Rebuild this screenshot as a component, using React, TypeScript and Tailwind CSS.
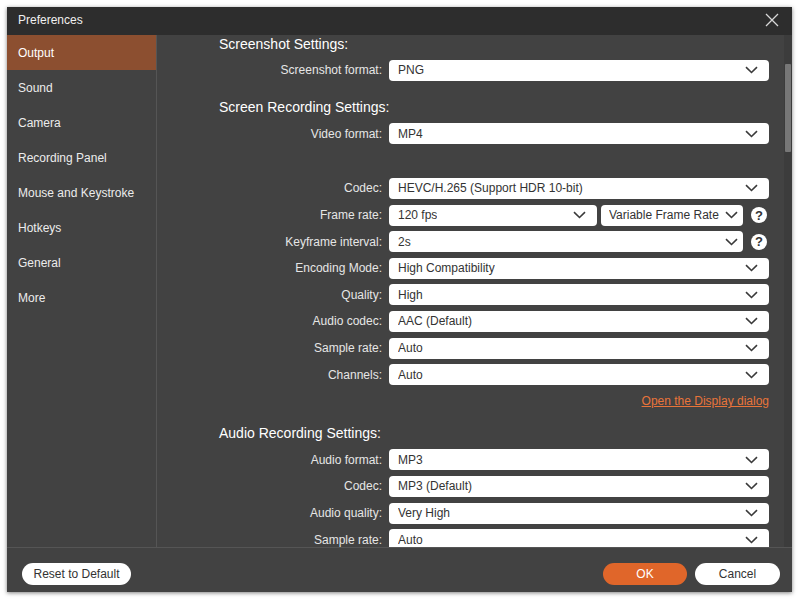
import React from "react";

const font = { fontFamily: '"Liberation Sans", Arial, sans-serif' };

function Chevron() {
  return (
    <svg width="13" height="8" viewBox="0 0 13 8" className="shrink-0">
      <path d="M1 1.2 L6.5 6.5 L12 1.2" fill="none" stroke="#3a3a3a" strokeWidth="1.6" />
    </svg>
  );
}

function Select({ value, className = "" }: { value: string; className?: string }) {
  return (
    <div className={`h-[21px] bg-white rounded-[4px] flex items-center justify-between pl-[9px] pr-[11px] text-[12px] text-[#333] ${className}`}>
      <span className="whitespace-nowrap overflow-hidden">{value}</span>
      <Chevron />
    </div>
  );
}

function Help() {
  return (
    <div className="w-[16px] h-[16px] rounded-full bg-white flex items-center justify-center text-[#333] text-[13px] font-bold shrink-0 leading-none">
      ?
    </div>
  );
}

function Row({ label, children }: { label: string; children: React.ReactNode }) {
  return (
    <div className="h-[26.6px] flex items-center">
      <div className="w-[232px] text-right pr-[7px] text-[12px] text-[#e6e6e6] shrink-0 whitespace-nowrap">{label}</div>
      <div className="w-[380px] flex items-center gap-[4px]">{children}</div>
    </div>
  );
}

function Heading({ children, className = "" }: { children: React.ReactNode; className?: string }) {
  return <div className={`h-[18px] flex items-center pl-[62px] text-[14px] text-white ${className}`}>{children}</div>;
}

export default function App() {
  const nav = ["Output", "Sound", "Camera", "Recording Panel", "Mouse and Keystroke", "Hotkeys", "General", "More"];
  return (
    <div className="w-[800px] h-[600px] bg-white p-[7px] pr-[8px] pb-[8px]" style={font}>
      <div className="w-[785px] h-[585px] bg-[#424242] flex flex-col shadow-[0_1px_4px_rgba(0,0,0,0.5)]">
        <div className="h-[28px] bg-[#2d2d2d] flex items-center justify-between pl-[11px] pr-[13px] shrink-0">
          <span className="text-[12px] text-[#f0f0f0] -mt-[2px]">Preferences</span>
          <svg width="14" height="14" viewBox="0 0 14 14" className="-mt-[2px]">
            <path d="M1 1 L13 13 M13 1 L1 13" stroke="#d8d8d8" strokeWidth="1.3" />
          </svg>
        </div>
        <div className="flex flex-1 min-h-0 border-b border-[#555]">
          <div className="w-[150px] border-r border-[#555] shrink-0 flex flex-col">
            {nav.map((n, i) => (
              <div
                key={n}
                className={`h-[35px] flex items-center pl-[11px] text-[12px] ${i === 0 ? "bg-[#8c4f30] text-white" : "text-[#ececec]"}`}
              >
                {n}
              </div>
            ))}
          </div>
          <div className="flex-1 relative overflow-hidden">
            <div className="flex flex-col">
              <Heading>Screenshot Settings:</Heading>
              <div className="mt-[4px]">
                <Row label="Screenshot format:"><Select value="PNG" className="w-full" /></Row>
              </div>
              <Heading className="mt-[15px]">Screen Recording Settings:</Heading>
              <div className="mt-[4px]">
                <Row label="Video format:"><Select value="MP4" className="w-full" /></Row>
              </div>
              <div className="mt-[28px]">
                <Row label="Codec:"><Select value="HEVC/H.265 (Support HDR 10-bit)" className="w-full" /></Row>
                <Row label="Frame rate:">
                  <Select value="120 fps" className="w-[208px]" />
                  <Select value="Variable Frame Rate" className="w-[142px] !pl-[8px] !pr-[5px]" />
                  <div className="ml-[4px]"><Help /></div>
                </Row>
                <Row label="Keyframe interval:">
                  <Select value="2s" className="w-[354px] !pr-[5px]" />
                  <div className="ml-[4px]"><Help /></div>
                </Row>
                <Row label="Encoding Mode:"><Select value="High Compatibility" className="w-full" /></Row>
                <Row label="Quality:"><Select value="High" className="w-full" /></Row>
                <Row label="Audio codec:"><Select value="AAC (Default)" className="w-full" /></Row>
                <Row label="Sample rate:"><Select value="Auto" className="w-full" /></Row>
                <Row label="Channels:"><Select value="Auto" className="w-full" /></Row>
                <div className="h-[26.6px] flex items-center justify-end w-[612px]">
                  <span className="text-[12px] text-[#e8743a] underline">Open the Display dialog</span>
                </div>
              </div>
              <Heading className="mt-[10px]">Audio Recording Settings:</Heading>
              <div className="mt-[4px]">
                <Row label="Audio format:"><Select value="MP3" className="w-full" /></Row>
                <Row label="Codec:"><Select value="MP3 (Default)" className="w-full" /></Row>
                <Row label="Audio quality:"><Select value="Very High" className="w-full" /></Row>
                <Row label="Sample rate:"><Select value="Auto" className="w-full" /></Row>
              </div>
            </div>
            <div className="absolute right-0 top-0 bottom-0 w-[8px] bg-[#3c3c3c]">
              <div className="absolute left-[1px] right-[1px] top-[29px] h-[88px] bg-[#777] rounded-[1px]" />
            </div>
          </div>
        </div>
        <div className="h-[44px] shrink-0 flex items-center justify-between pl-[15px] pr-[12px] pt-[8px]">
          <button className="h-[22px] w-[109px] rounded-full bg-white text-[12px] text-[#333]">Reset to Default</button>
          <div className="flex gap-[8px]">
            <button className="h-[22px] w-[84px] rounded-full bg-[#e0662a] text-[12px] text-white">OK</button>
            <button className="h-[22px] w-[85px] rounded-full bg-white text-[12px] text-[#333]">Cancel</button>
          </div>
        </div>
      </div>
    </div>
  );
}
